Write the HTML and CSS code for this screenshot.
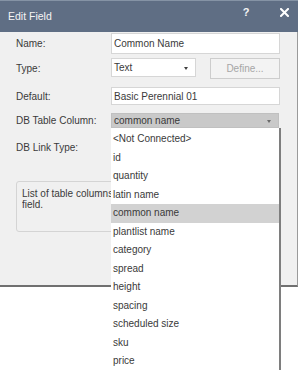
FILE: index.html
```html
<!DOCTYPE html>
<html>
<head>
<meta charset="utf-8">
<link rel="stylesheet" href="styles.css">
</head>
<body>
<div class="dialog">
  <div class="titlebar">
    <span class="title">Edit Field</span>
    <span class="help">?</span>
    <svg class="close" width="9" height="9" viewBox="0 0 9 9"><path d="M1 1 L8 8 M8 1 L1 8" stroke="#ffffff" stroke-width="2" stroke-linecap="square"/></svg>
  </div>
  <div class="content">
    <div class="row r-name">
      <span class="label">Name:</span>
      <div class="input">Common Name</div>
    </div>
    <div class="row r-type">
      <span class="label">Type:</span>
      <div class="ctrls">
        <div class="select">Text<span class="arrow"></span></div>
        <div class="btn">Define...</div>
      </div>
    </div>
    <div class="row r-default">
      <span class="label">Default:</span>
      <div class="input">Basic Perennial 01</div>
    </div>
    <div class="row r-db">
      <span class="label">DB Table Column:</span>
      <div class="select grey">common name<span class="arrow"></span></div>
    </div>
    <div class="row r-link">
      <span class="label">DB Link Type:</span>
    </div>
    <div class="desc"><div class="desc-text">List of table columns to link to this<br>field.</div></div>
  </div>
  <ul class="dropdown">
    <li>&lt;Not Connected&gt;</li>
    <li>id</li>
    <li>quantity</li>
    <li>latin name</li>
    <li class="sel">common name</li>
    <li>plantlist name</li>
    <li>category</li>
    <li>spread</li>
    <li>height</li>
    <li>spacing</li>
    <li>scheduled size</li>
    <li>sku</li>
    <li>price</li>
  </ul>
</div>
</body>
</html>
```
FILE: styles.css
```css
html, body {
  margin: 0;
  padding: 0;
  height: 370px;
  overflow: hidden;
  background: #ffffff;
  font-family: "Liberation Sans", Arial, sans-serif;
}
.dialog {
  position: relative;
  width: 298px;
}
.titlebar {
  height: 32px;
  background: #5f6e84;
  border-top: 1px solid #8593a5;
  box-sizing: border-box;
  display: flex;
  align-items: flex-start;
  color: #f4f4f4;
}
.title {
  margin-left: 8px;
  font-size: 10.5px;
  line-height: 31px;
}
.help {
  margin-left: 191px;
  margin-top: 5px;
  font-size: 11px;
  font-weight: bold;
  line-height: 12px;
}
.close {
  margin-left: 30px;
  margin-top: 7px;
}
.content {
  box-sizing: border-box;
  height: 255px;
  background: #f0f0f0;
  border-bottom: 2px solid #707070;
  border-right: 1px solid #9a9a9a;
  padding: 1px 0 0 16px;
  display: flex;
  flex-direction: column;
  color: #3a3a3a;
  font-size: 10px;
}
.row {
  display: grid;
  grid-template-columns: 95px 169px;
  align-items: center;
}
.label {
  font-size: 10px;
  color: #3a3a3a;
}
.input {
  box-sizing: border-box;
  background: #fff;
  border: 1px solid #d6d6d6;
  padding-left: 2px;
  height: 100%;
  display: flex;
  align-items: center;
}
.r-name { height: 21px; }
.r-type { height: 21px; margin-top: 4px; }
.r-default { height: 18px; margin-top: 8px; }
.r-db { height: 15px; margin-top: 8px; }
.r-link { height: 18px; margin-top: 10px; }
.ctrls {
  display: flex;
  align-items: flex-start;
  height: 100%;
}
.select {
  box-sizing: border-box;
  position: relative;
  background: #fff;
  border: 1px solid #d6d6d6;
  padding-left: 2px;
  display: flex;
  align-items: center;
}
.r-type .select {
  width: 85px;
  height: 19px;
}
.select.grey {
  height: 100%;
  background: #c9c9c9;
  border-color: #c0c0c0;
  width: 168px;
}
.arrow {
  position: absolute;
  right: 7px;
  top: 50%;
  margin-top: -1px;
  width: 0;
  height: 0;
  border-left: 2.5px solid transparent;
  border-right: 2.5px solid transparent;
  border-top: 3px solid #404040;
}
.select.grey .arrow {
  right: 7px;
  border-top-color: #6a6a6a;
}
.btn {
  box-sizing: border-box;
  margin-left: 14px;
  width: 70px;
  height: 21px;
  border: 1px solid #cdcdcd;
  background: #f3f3f3;
  color: #a6a6a6;
  display: flex;
  align-items: center;
  justify-content: center;
}
.desc {
  box-sizing: border-box;
  margin-top: 25px;
  width: 265px;
  height: 51px;
  border: 1px solid #d4d4d4;
  border-radius: 3px;
  padding: 6px 5px;
  line-height: 11px;
}
.desc-text {
  width: 89px;
  overflow: hidden;
  white-space: nowrap;
}
.dropdown {
  position: absolute;
  left: 111px;
  top: 128px;
  width: 168px;
  height: 260px;
  margin: 0;
  padding: 2px 0 0 0;
  list-style: none;
  background: #ffffff;
  border-right: 2px solid #7e7e7e;
  font-size: 10px;
  color: #3a3a3a;
}
.dropdown li {
  height: 18.5px;
  line-height: 18.5px;
  padding-left: 2px;
}
.dropdown li.sel {
  background: #d2d2d2;
}
```
